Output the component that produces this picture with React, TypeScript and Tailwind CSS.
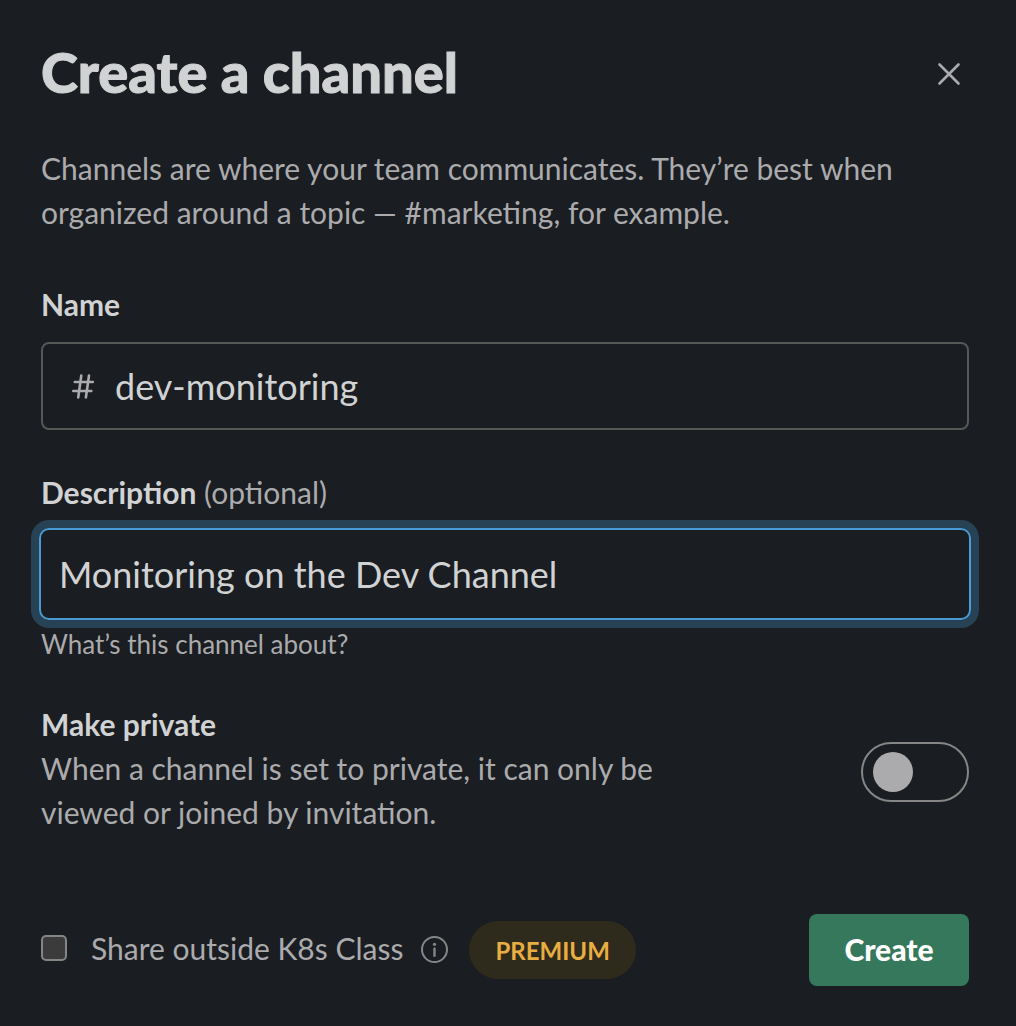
import { useState } from "react";

export default function App() {
  const [name, setName] = useState("dev-monitoring");
  const [description, setDescription] = useState("Monitoring on the Dev Channel");
  const [isPrivate, setIsPrivate] = useState(false);
  const [shared, setShared] = useState(false);

  return (
    <main className="min-h-screen bg-[#1a1d21] pt-[42px] pr-[47px] pb-10 pl-[41px] font-[Lato,sans-serif] text-[30px] leading-[44px] text-[#ababad]">
      <header className="flex items-start justify-between">
        <h1 className="text-[56px] leading-[60px] font-black text-[#d1d2d3] [-webkit-text-stroke:1px_currentColor]">Create a channel</h1>
        <button type="button" aria-label="Close" className="mt-3 flex size-10 items-center justify-center">
          <svg viewBox="0 0 24 24" className="size-6" fill="none" stroke="currentColor" strokeWidth="2.6" strokeLinecap="round">
            <path d="M2.5 2.5 21.5 21.5M21.5 2.5 2.5 21.5" />
          </svg>
        </button>
      </header>

      <p className="mt-11 max-w-[880px]">
        Channels are where your team communicates. They’re best when organized around a topic — #marketing, for example.
      </p>

      <form onSubmit={(e) => e.preventDefault()}>
        <div className="mt-12">
          <label htmlFor="name" className="block font-bold text-[#d1d2d3]">Name</label>
          <div className="mt-4 flex h-[88px] items-center rounded-lg border-2 border-[#565856] px-7">
            <svg viewBox="0 0 24 28" className="mr-5 h-7 w-6" fill="none" stroke="currentColor" strokeWidth="2.6" strokeLinecap="round">
              <path d="M10.3 3.5 7.2 25.5M18 3.5 14.9 25.5M3.8 10H21.8M2.3 19H20.3" />
            </svg>
            <input id="name" value={name} onChange={(e) => setName(e.target.value)} className="min-w-0 flex-1 bg-transparent text-[36px] text-[#d1d2d3] outline-none" />
          </div>
        </div>

        <div className="mt-10">
          <label htmlFor="description" className="block">
            <span className="font-bold text-[#d1d2d3]">Description</span> (optional)
          </label>
          <input id="description" value={description} onChange={(e) => setDescription(e.target.value)} className="-mx-0.5 mt-[14px] block h-[92px] w-[calc(100%+4px)] rounded-[10px] border-2 border-[#4a9bd3] bg-transparent px-[18px] text-[36px] text-[#d1d2d3] ring-8 ring-[#284255] outline-none" />
          <p className="mt-1.5 text-[26px] leading-9">What’s this channel about?</p>
        </div>

        <div className="mt-10 flex items-end justify-between">
          <div className="max-w-[640px]">
            <label htmlFor="private" className="block font-bold text-[#d1d2d3]">Make private</label>
            <p>When a channel is set to private, it can only be viewed or joined by invitation.</p>
          </div>
          <input id="private" type="checkbox" role="switch" checked={isPrivate} onChange={(e) => setIsPrivate(e.target.checked)} className="mb-8 flex h-[60px] w-[108px] shrink-0 appearance-none items-center rounded-full border-2 border-[#868686] px-2.5 before:size-10 before:rounded-full before:bg-[#ababad] checked:justify-end" />
        </div>

        <footer className="mt-20 flex items-center">
          <div className="mb-1 flex items-center">
            <input id="share" type="checkbox" checked={shared} onChange={(e) => setShared(e.target.checked)} className="size-[26px] appearance-none rounded-[5px] border-2 border-[#858585] bg-[#3b3b3b] checked:bg-[#4a9bd3]" />
            <label htmlFor="share" className="ml-6">Share outside K8s Class</label>
          </div>
          <svg viewBox="0 0 28 28" className="ml-[18px] size-7 text-[#868686]" fill="none" stroke="currentColor" strokeWidth="2">
            <circle cx="13.5" cy="13.5" r="12.5" />
            <path d="M13.5 12.8V19.8" strokeWidth="2.4" strokeLinecap="round" />
            <circle cx="13.5" cy="8.3" r="1.6" fill="currentColor" stroke="none" />
          </svg>
          <span className="ml-5 rounded-full bg-[#2e2a1c] px-[26px] pt-2 pb-1.5 text-[24px] font-bold text-[#e8ae41]">PREMIUM</span>
          <button type="submit" className="ml-auto h-[72px] w-40 rounded-lg bg-[#35785b] pb-0.5 font-black text-white">Create</button>
        </footer>
      </form>
    </main>
  );
}
